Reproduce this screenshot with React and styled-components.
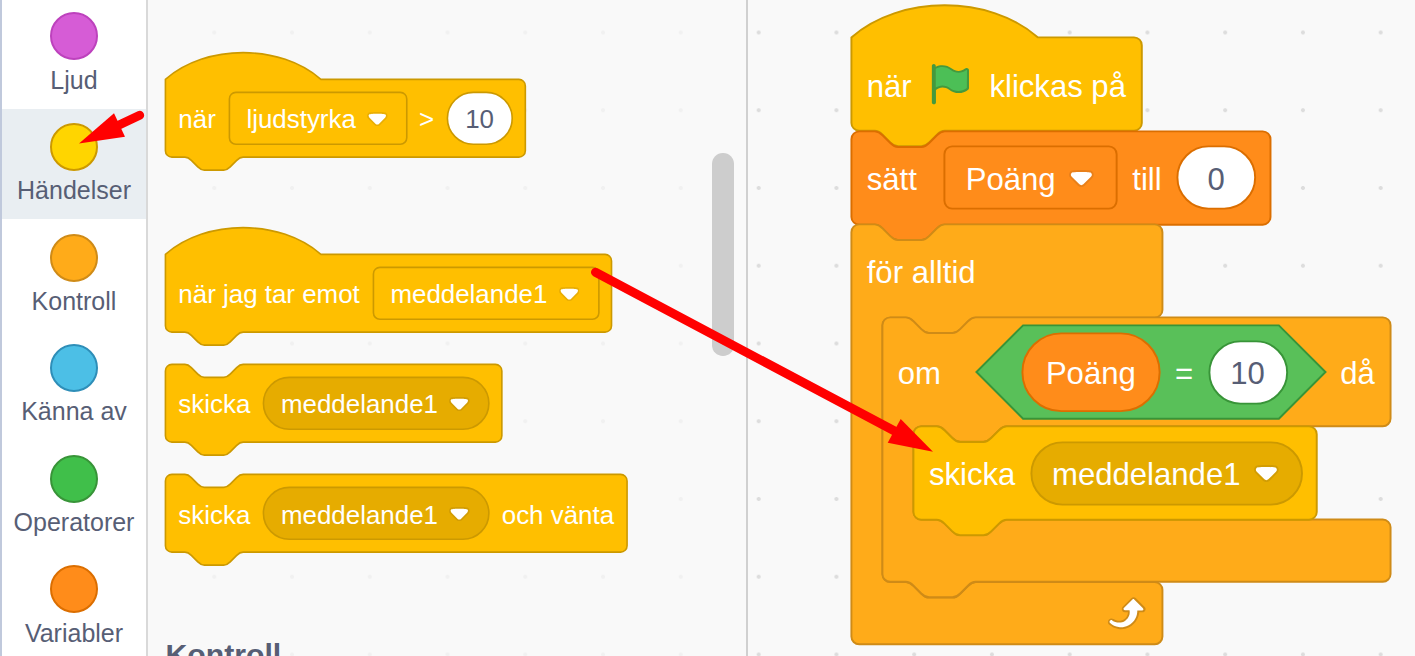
import React from "react";
import styled, { createGlobalStyle } from "styled-components";

const Global = createGlobalStyle`
  * { box-sizing: border-box; }
  html, body { margin: 0; padding: 0; overflow: hidden; }
  body { font-family: "Liberation Sans", Arial, sans-serif; }
`;

const palette = {
  events: { fill: "#ffbf00", stroke: "#cc9900", dark: "#e6ac00" },
  data: { fill: "#ff8c1a", stroke: "#db6e00", dark: "#ff8000" },
  control: { fill: "#ffab19", stroke: "#cf8b17", dark: "#ec9c13" },
  operators: { fill: "#59c059", stroke: "#389438", dark: "#46b946" },
};

/* Lengths inside blocks are counted in workspace units (--u). */
const u = (n) => `calc(${n} * var(--u))`;

const Editor = styled.div`
  position: relative;
  display: flex;
  width: 1415px;
  height: 656px;
  overflow: hidden;
  background: #f9f9f9;
`;

const Categories = styled.nav`
  flex: none;
  width: 148px;
  height: 656px;
  overflow: hidden;
  background: #fff;
  border-left: 2px solid #c0c9dc;
  border-right: 2px solid #d9d9d9;
`;

const CategoryList = styled.div`
  display: flex;
  flex-direction: column;
  margin-top: -1.7px;
`;

const Category = styled.div`
  display: flex;
  flex: none;
  flex-direction: column;
  align-items: center;
  height: 110.55px;
  padding-top: 14.15px;
  background: ${(p) => (p.$selected ? "#e9eef2" : "transparent")};
`;

const Bubble = styled.div`
  width: 48px;
  height: 48px;
  border-radius: 50%;
  background: ${(p) => p.$fill};
  border: 2px solid ${(p) => p.$stroke};
`;

const CategoryName = styled.div`
  margin-top: 5.35px;
  font-size: 25px;
  line-height: 28px;
  white-space: nowrap;
  color: #575e75;
`;

const dots = (color) => `
  background-image: radial-gradient(circle, ${color} 1.6px, transparent 2.3px);
  background-size: 77.76px 77.76px;
`;

const Flyout = styled.section`
  --u: 1.62px;
  --drop: 2;
  position: relative;
  flex: none;
  width: 600px;
  height: 656px;
  overflow: hidden;
  padding: 79px 0 0 17.4px;
  border-right: 2px solid #d0d0d0;
  ${dots("#f1f1f1")}
  background-position: 27.4px -6.4px;
`;

const FlyoutItem = styled.div`
  margin-bottom: ${(p) => p.$gap}px;
`;

const FlyoutHeading = styled.h2`
  margin: 0;
  font-size: ${u(18.667)};
  line-height: 34px;
  font-weight: 700;
  color: #575e75;
`;

const Scrollbar = styled.div`
  position: absolute;
  left: 564.4px;
  top: 153px;
  width: 21.6px;
  height: 203px;
  border-radius: 10.8px;
  background: #cdcdcd;
`;

const Workspace = styled.section`
  --u: 1.944px;
  --drop: 3.3;
  position: relative;
  flex: 1;
  height: 656px;
  overflow: hidden;
  ${dots("#dddddd")}
  background-position: -28.2px -6.4px;
`;

const Script = styled.div`
  position: absolute;
  left: 103.2px;
  top: 37.3px;
`;

const Backdrop = styled.svg`
  position: absolute;
  left: 0;
  top: 0;
  width: ${(p) => u(p.$w)};
  height: ${(p) => u(p.$h)};
  overflow: visible;
  transform: translate(0.4px, 0.4px);
`;

const BlockBox = styled.div`
  position: relative;
  width: ${(p) => u(p.$w)};
`;

const Row = styled.div`
  position: relative;
  display: flex;
  align-items: center;
  gap: ${u(8)};
  height: ${(p) => u(p.$h || 48)};
  padding-left: ${u(8)};
`;

const Mouth = styled.div`
  position: relative;
  padding-left: ${u(16)};
`;

const Foot = styled.div`
  position: relative;
  display: flex;
  align-items: center;
  justify-content: flex-end;
  height: ${u(32)};
  padding: 0 ${u(8)} 0 0;
`;

const Label = styled.span`
  position: relative;
  flex: none;
  min-width: ${(p) => u(p.$min || 0)};
  font-size: ${u(16)};
  line-height: ${u(20)};
  padding-top: calc(var(--drop) * var(--u));
  white-space: nowrap;
  color: ${(p) => p.$color || "#fff"};
`;

const Pill = styled.span`
  position: relative;
  display: flex;
  flex: none;
  align-items: center;
  justify-content: ${(p) => (p.$menu ? "flex-start" : "center")};
  gap: ${u(7)};
  width: ${(p) => u(p.$w)};
  height: ${(p) => u(p.$h)};
  padding-left: ${(p) => (p.$menu ? u(10.9) : 0)};
`;

const HexRow = styled.span`
  position: relative;
  display: flex;
  flex: none;
  align-items: center;
  gap: ${u(8)};
  width: ${(p) => u(p.$w)};
  height: ${u(48)};
  padding-left: ${u(24)};
`;

const Glyph = styled.svg`
  position: relative;
  flex: none;
  width: ${(p) => u(p.$w)};
  height: ${(p) => u(p.$h)};
  margin-top: ${(p) => u(p.$drop || 0)};
`;

const Pointers = styled.svg`
  position: absolute;
  left: 0;
  top: 0;
  pointer-events: none;
`;

const NOTCH = "c2,0 3,1 4,2 l4,4 c1,1 2,2 4,2 h12 c2,0 3,-1 4,-2 l4,-4 c1,-1 2,-2 4,-2";
const NOTCH_BACK = "c-2,0 -3,1 -4,2 l-4,4 c-1,1 -2,2 -4,2 h-12 c-2,0 -3,-1 -4,-2 l-4,-4 c-1,-1 -2,-2 -4,-2";
const TOP = `M0,4 A4,4 0 0,1 4,0 H12 ${NOTCH}`;
const HAT = "M0,0 c25,-22 71,-22 96,0";

const stackPath = (w, h, hat) =>
  `${hat ? HAT : TOP} H${w - 4} a4,4 0 0,1 4,4 V${h - 4} a4,4 0 0,1 -4,4 H48 ${NOTCH_BACK} H4 a4,4 0 0,1 -4,-4 z`;

const cPath = (w, head, mouth, cap) => {
  const inner = head + mouth;
  const h = inner + 32;
  const end = cap ? "H4" : `H48 ${NOTCH_BACK} H4`;
  return (
    `${TOP} H${w - 4} a4,4 0 0,1 4,4 V${head - 4} a4,4 0 0,1 -4,4 H64 ${NOTCH_BACK} h-8 a4,4 0 0,0 -4,4 ` +
    `V${inner - 4} a4,4 0 0,0 4,4 h8 ${NOTCH} H${w - 4} a4,4 0 0,1 4,4 V${h - 4} a4,4 0 0,1 -4,4 ${end} a4,4 0 0,1 -4,-4 z`
  );
};

function Shape({ w, h, d, fill, stroke }) {
  return (
    <Backdrop $w={w} $h={h} viewBox={`0 0 ${w} ${h}`}>
      <path d={d} fill={fill} stroke={stroke} strokeWidth="1" />
    </Backdrop>
  );
}

function RoundRect({ w, h, r, fill, stroke }) {
  return (
    <Backdrop $w={w} $h={h} viewBox={`0 0 ${w} ${h}`}>
      <rect width={w} height={h} rx={r} fill={fill} stroke={stroke} strokeWidth="1" />
    </Backdrop>
  );
}

function Block({ kind, w, hat, children }) {
  const c = palette[kind];
  return (
    <BlockBox $w={w}>
      <Shape w={w} h={48} d={stackPath(w, 48, hat)} fill={c.fill} stroke={c.stroke} />
      <Row>{children}</Row>
    </BlockBox>
  );
}

function CBlock({ w, head, mouth, cap, header, footer, children }) {
  const c = palette.control;
  return (
    <BlockBox $w={w}>
      <Shape w={w} h={head + mouth + 32} d={cPath(w, head, mouth, cap)} fill={c.fill} stroke={c.stroke} />
      <Row $h={head}>{header}</Row>
      <Mouth>{children}</Mouth>
      <Foot>{footer}</Foot>
    </BlockBox>
  );
}

function Arrow() {
  return (
    <Glyph $w={12.71} $h={8.79} $drop={1.2} viewBox="0 0 12.71 8.79">
      <path
        d="M12.71,2.44A2.41,2.41,0,0,1,12,4.16L8.08,8.08a2.45,2.45,0,0,1-3.45,0L.72,4.16A2.42,2.42,0,0,1,0,2.44,2.48,2.48,0,0,1,.71.71C1,.47,1.43,0,6.36,0S11.75.46,12,.71A2.44,2.44,0,0,1,12.71,2.44Z"
        fill="#231f20"
        opacity="0.1"
      />
      <path
        d="M6.36,7.79a1.43,1.43,0,0,1-1-.42L1.42,3.45a1.44,1.44,0,0,1,0-2c.56-.56,9.31-.56,9.87,0a1.44,1.44,0,0,1,0,2L7.37,7.37A1.43,1.43,0,0,1,6.36,7.79Z"
        fill="#fff"
      />
    </Glyph>
  );
}

function Menu({ kind, w, round, children }) {
  const c = palette[kind];
  return (
    <Pill $w={w} $h={32} $menu>
      <RoundRect w={w} h={32} r={round ? 16 : 4} fill={round ? c.dark : c.fill} stroke={c.stroke} />
      <Label>{children}</Label>
      <Arrow />
    </Pill>
  );
}

function NumberInput({ kind, children }) {
  return (
    <Pill $w={40} $h={32}>
      <RoundRect w={40} h={32} r={16} fill="#fff" stroke={palette[kind].stroke} />
      <Label $color="#575e75">{children}</Label>
    </Pill>
  );
}

function Variable({ w, children }) {
  return (
    <Pill $w={w} $h={40}>
      <RoundRect w={w} h={40} r={20} fill={palette.data.fill} stroke={palette.data.stroke} />
      <Label>{children}</Label>
    </Pill>
  );
}

function Condition({ w, children }) {
  const c = palette.operators;
  return (
    <HexRow $w={w}>
      <Shape w={w} h={48} d={`M24,0 H${w - 24} l24,24 l-24,24 H24 l-24,-24 z`} fill={c.fill} stroke={c.stroke} />
      {children}
    </HexRow>
  );
}

function Flag() {
  return (
    <Glyph $w={24} $h={24} viewBox="0 0 24 24">
      <path
        d="M20.8 3.7c-.4-.2-.9-.1-1.2.2-2 1.6-4.8 1.6-6.8 0-2.3-1.9-5.6-2.3-8.3-1v-.4c0-.6-.5-1-1-1s-1 .4-1 1v18.8c0 .5.5 1 1 1h.1c.5 0 1-.5 1-1v-6.4c1-.7 2.1-1.2 3.4-1.3 1.2 0 2.4.4 3.4 1.2 2.9 2.3 7 2.3 9.8 0 .3-.2.4-.5.4-.9V4.7c0-.5-.3-.9-.8-1z"
        fill="#45993d"
      />
      <path
        d="M20.6 4.8l-.1 9.1c-2.5 2-6.1 2-8.6.1-1.1-.9-2.5-1.4-4-1.4-1.2.1-2.3.5-3.4 1.1V4c2.5-1.4 5.5-1.1 7.7.6 2.4 1.9 5.7 1.9 8.1 0h.2c0 .1.1.1.1.2z"
        fill="#4cbf56"
      />
    </Glyph>
  );
}

function Loop() {
  return (
    <Glyph $w={24} $h={24} viewBox="0 0 24 24">
      <path
        d="M23.3,11c-.3.6-.9,1-1.5,1h-1.6c-.1,1.3-.5,2.5-1.1,3.6c-.9,1.7-2.3,3.2-4.1,4.1c-1.7.9-3.6,1.2-5.5.9c-1.8-.3-3.5-1.1-4.9-2.3c-.7-.7-.7-1.9,0-2.6c.6-.6,1.6-.7,2.3-.2H7c.9.6,1.9.9,2.9.9s1.9-.3,2.7-.9c1.1-.8,1.8-2.1,1.8-3.5h-1.5c-.9,0-1.7-.7-1.7-1.7c0-.4.2-.9.5-1.2l4.4-4.4c.7-.6,1.7-.6,2.4,0L23,9.2C23.5,9.7,23.6,10.4,23.3,11z"
        fill="#cf8b17"
      />
      <path
        d="M21.8,11h-2.6c0,1.5-.3,2.9-1,4.2c-.8,1.6-2.1,2.8-3.7,3.6c-1.5.8-3.3,1.1-4.9.8c-1.6-.2-3.2-1-4.4-2.1c-.4-.3-.4-.9-.1-1.2c.3-.4.9-.4,1.2-.1c1,.7,2.2,1.1,3.4,1.1s2.3-.3,3.3-1c.9-.6,1.6-1.5,2-2.6c.3-.9.4-1.8.2-2.8h-2.4c-.4,0-.7-.3-.7-.7c0-.2.1-.3.2-.4l4.4-4.4c.3-.3.7-.3.9,0L22,9.8c.3.3.4.6.3.9S22,11,21.8,11z"
        fill="#fff"
      />
    </Glyph>
  );
}

const categories = [
  { name: "Ljud", fill: "#d65cd6", stroke: "#bd42bd" },
  { name: "Händelser", fill: "#ffd500", stroke: "#cc9900", selected: true },
  { name: "Kontroll", fill: "#ffab19", stroke: "#cf8b17" },
  { name: "Känna av", fill: "#4cbfe6", stroke: "#2e8eb8" },
  { name: "Operatorer", fill: "#40bf4a", stroke: "#389438" },
  { name: "Variabler", fill: "#ff8c1a", stroke: "#db6e00" },
];

export default function App() {
  return (
    <>
      <Global />
      <Editor>
        <Categories>
          <CategoryList>
            {categories.map((c) => (
              <Category key={c.name} $selected={c.selected}>
                <Bubble $fill={c.fill} $stroke={c.stroke} />
                <CategoryName>{c.name}</CategoryName>
              </Category>
            ))}
          </CategoryList>
        </Categories>

        <Flyout>
          <FlyoutItem $gap={97.2}>
            <Block kind="events" hat w={222.2}>
              <Label>när</Label>
              <Menu kind="events" w={109.5}>ljudstyrka</Menu>
              <Label>&gt;</Label>
              <NumberInput kind="events">10</NumberInput>
            </Block>
          </FlyoutItem>
          <FlyoutItem $gap={32.4}>
            <Block kind="events" hat w={275.4}>
              <Label>när jag tar emot</Label>
              <Menu kind="events" w={139.2}>meddelande1</Menu>
            </Block>
          </FlyoutItem>
          <FlyoutItem $gap={32.4}>
            <Block kind="events" w={207.7}>
              <Label>skicka</Label>
              <Menu kind="events" w={139.2} round>meddelande1</Menu>
            </Block>
          </FlyoutItem>
          <FlyoutItem $gap={86.2}>
            <Block kind="events" w={285}>
              <Label>skicka</Label>
              <Menu kind="events" w={139.2} round>meddelande1</Menu>
              <Label>och vänta</Label>
            </Block>
          </FlyoutItem>
          <FlyoutHeading>Kontroll</FlyoutHeading>
          <Scrollbar />
        </Flyout>

        <Workspace>
          <Script>
            <Block kind="events" hat w={149.4}>
              <Label>när</Label>
              <Flag />
              <Label>klickas på</Label>
            </Block>
            <Block kind="data" w={215.6}>
              <Label $min={32}>sätt</Label>
              <Menu kind="data" w={88.6}>Poäng</Menu>
              <Label>till</Label>
              <NumberInput kind="data">0</NumberInput>
            </Block>
            <CBlock w={160} head={48} mouth={136} cap header={<Label>för alltid</Label>} footer={<Loop />}>
              <CBlock
                w={261.4}
                head={56}
                mouth={48}
                header={
                  <>
                    <Label $min={32}>om</Label>
                    <Condition w={179.6}>
                      <Variable w={70.6}>Poäng</Variable>
                      <Label>=</Label>
                      <NumberInput kind="operators">10</NumberInput>
                    </Condition>
                    <Label>då</Label>
                  </>
                }
              >
                <Block kind="events" w={207.5}>
                  <Label>skicka</Label>
                  <Menu kind="events" w={139.2} round>meddelande1</Menu>
                </Block>
              </CBlock>
            </CBlock>
          </Script>
        </Workspace>

        <Pointers width="1415" height="656" viewBox="0 0 1415 656" fill="#f00" stroke="#f00">
          <path d="M79,143.6 L114,113.2 L125,136.8 z" stroke="none" />
          <path d="M118,125.5 L139.7,115.3" strokeWidth="9" strokeLinecap="round" />
          <path d="M933,451.7 L900.7,419 L887.7,442.7 z" stroke="none" />
          <path d="M595.5,272.3 L896,431.8" strokeWidth="9" strokeLinecap="round" />
        </Pointers>
      </Editor>
    </>
  );
}
